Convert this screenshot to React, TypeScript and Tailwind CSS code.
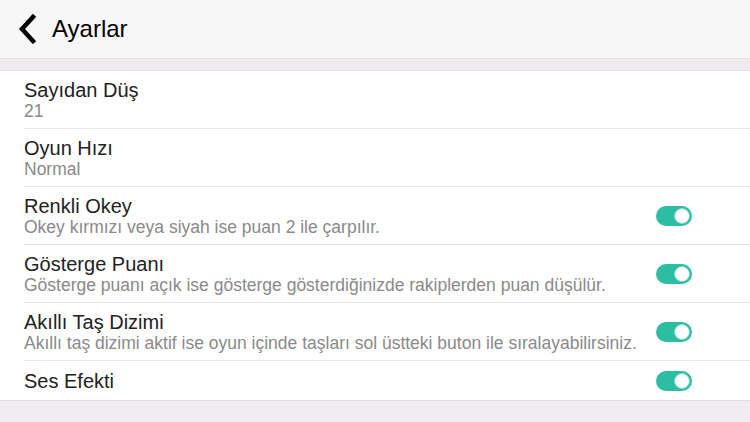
import React from "react";

const Toggle = () => (
  <div className="relative w-[36px] h-[20px] rounded-full bg-[#2dbda3] shrink-0">
    <div className="absolute right-[2px] top-[2px] w-[16px] h-[16px] rounded-full bg-white border border-[#7fd8c6]" />
  </div>
);

type Row = { title: string; sub?: string; toggle?: boolean };

const rows: Row[] = [
  { title: "Sayıdan Düş", sub: "21" },
  { title: "Oyun Hızı", sub: "Normal" },
  { title: "Renkli Okey", sub: "Okey kırmızı veya siyah ise puan 2 ile çarpılır.", toggle: true },
  { title: "Gösterge Puanı", sub: "Gösterge puanı açık ise gösterge gösterdiğinizde rakiplerden puan düşülür.", toggle: true },
  { title: "Akıllı Taş Dizimi", sub: "Akıllı taş dizimi aktif ise oyun içinde taşları sol üstteki buton ile sıralayabilirsiniz.", toggle: true },
  { title: "Ses Efekti", toggle: true },
];

export default function App() {
  return (
    <div className="w-[750px] h-[422px] bg-[#efebef] overflow-hidden" style={{ fontFamily: '"Liberation Sans", Arial, sans-serif' }}>
      <div className="h-[59px] bg-[#f7f7f7] border-b border-[#e2dfe2] flex items-center">
        <svg width="20" height="30" viewBox="0 0 20 30" className="ml-[17px]">
          <path d="M16 3 L5 15 L16 27" fill="none" stroke="#000" strokeWidth="4.5" strokeLinecap="square" />
        </svg>
        <span className="ml-[15px] text-[24px] text-black">Ayarlar</span>
      </div>
      <div className="mt-[11px] bg-white border-y border-[#e2dfe2]">
        {rows.map((r, i) => (
          <div key={i} className="pl-[24px]">
            <div className={`flex items-center pr-[58px] ${r.sub ? "h-[58px]" : "h-[39px]"} ${i < rows.length - 1 ? "border-b border-[#e6e6e6]" : ""}`}>
              <div className="flex-1 min-w-0">
                <div className="text-[20px] leading-[22px] text-[#222]">{r.title}</div>
                {r.sub && <div className="text-[17.5px] leading-[20px] text-[#8a8a8a] whitespace-nowrap">{r.sub}</div>}
              </div>
              {r.toggle && <Toggle />}
            </div>
          </div>
        ))}
      </div>
    </div>
  );
}
